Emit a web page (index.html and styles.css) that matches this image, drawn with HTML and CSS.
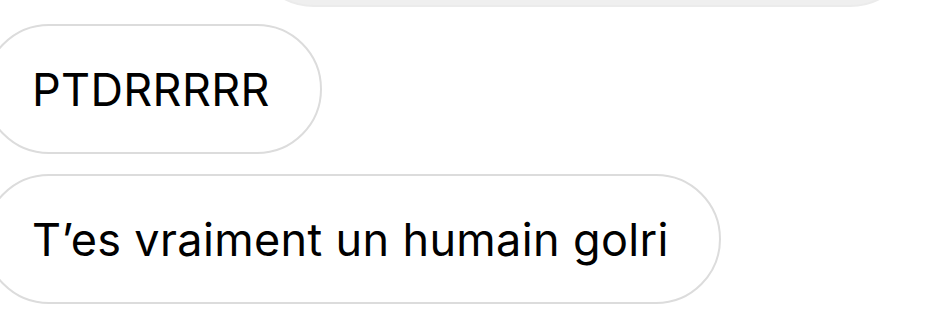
FILE: index.html
```html
<!doctype html>
<html lang="fr">
<head>
  <meta charset="utf-8">
  <title>Messages</title>
  <link rel="stylesheet" href="styles.css">
</head>
<body>
  <div class="thread">
    <div class="row row-right">
      <div class="bubble bubble-gray"></div>
    </div>
    <div class="row">
      <div class="bubble">PTDRRRRR</div>
    </div>
    <div class="row">
      <div class="bubble">T’es vraiment un humain golri</div>
    </div>
  </div>
</body>
</html>
```

FILE: styles.css
```css
html, body {
  margin: 0;
  padding: 0;
  background: #ffffff;
  overflow: hidden;
}

body {
  width: 942px;
  height: 313px;
  font-family: Inter, "Liberation Sans", sans-serif;
  color: #000000;
}

.thread {
  display: flex;
  flex-direction: column;
  gap: 20px;
  margin-top: -123px;
  margin-left: -16px;
}

.row {
  display: flex;
}

.row-right {
  justify-content: flex-end;
  padding-right: 27px;
  margin-bottom: -3px;
}

.bubble {
  box-sizing: border-box;
  height: 130px;
  display: flex;
  align-items: center;
  padding: 0 50px 0 46px;
  border: 2.5px solid #dcdcdc;
  border-radius: 65px;
  font-size: 45px;
  letter-spacing: 0.35px;
  white-space: nowrap;
}

.bubble-gray {
  width: 666px;
  background: #efefef;
  border-color: #ebebeb;
}
```
